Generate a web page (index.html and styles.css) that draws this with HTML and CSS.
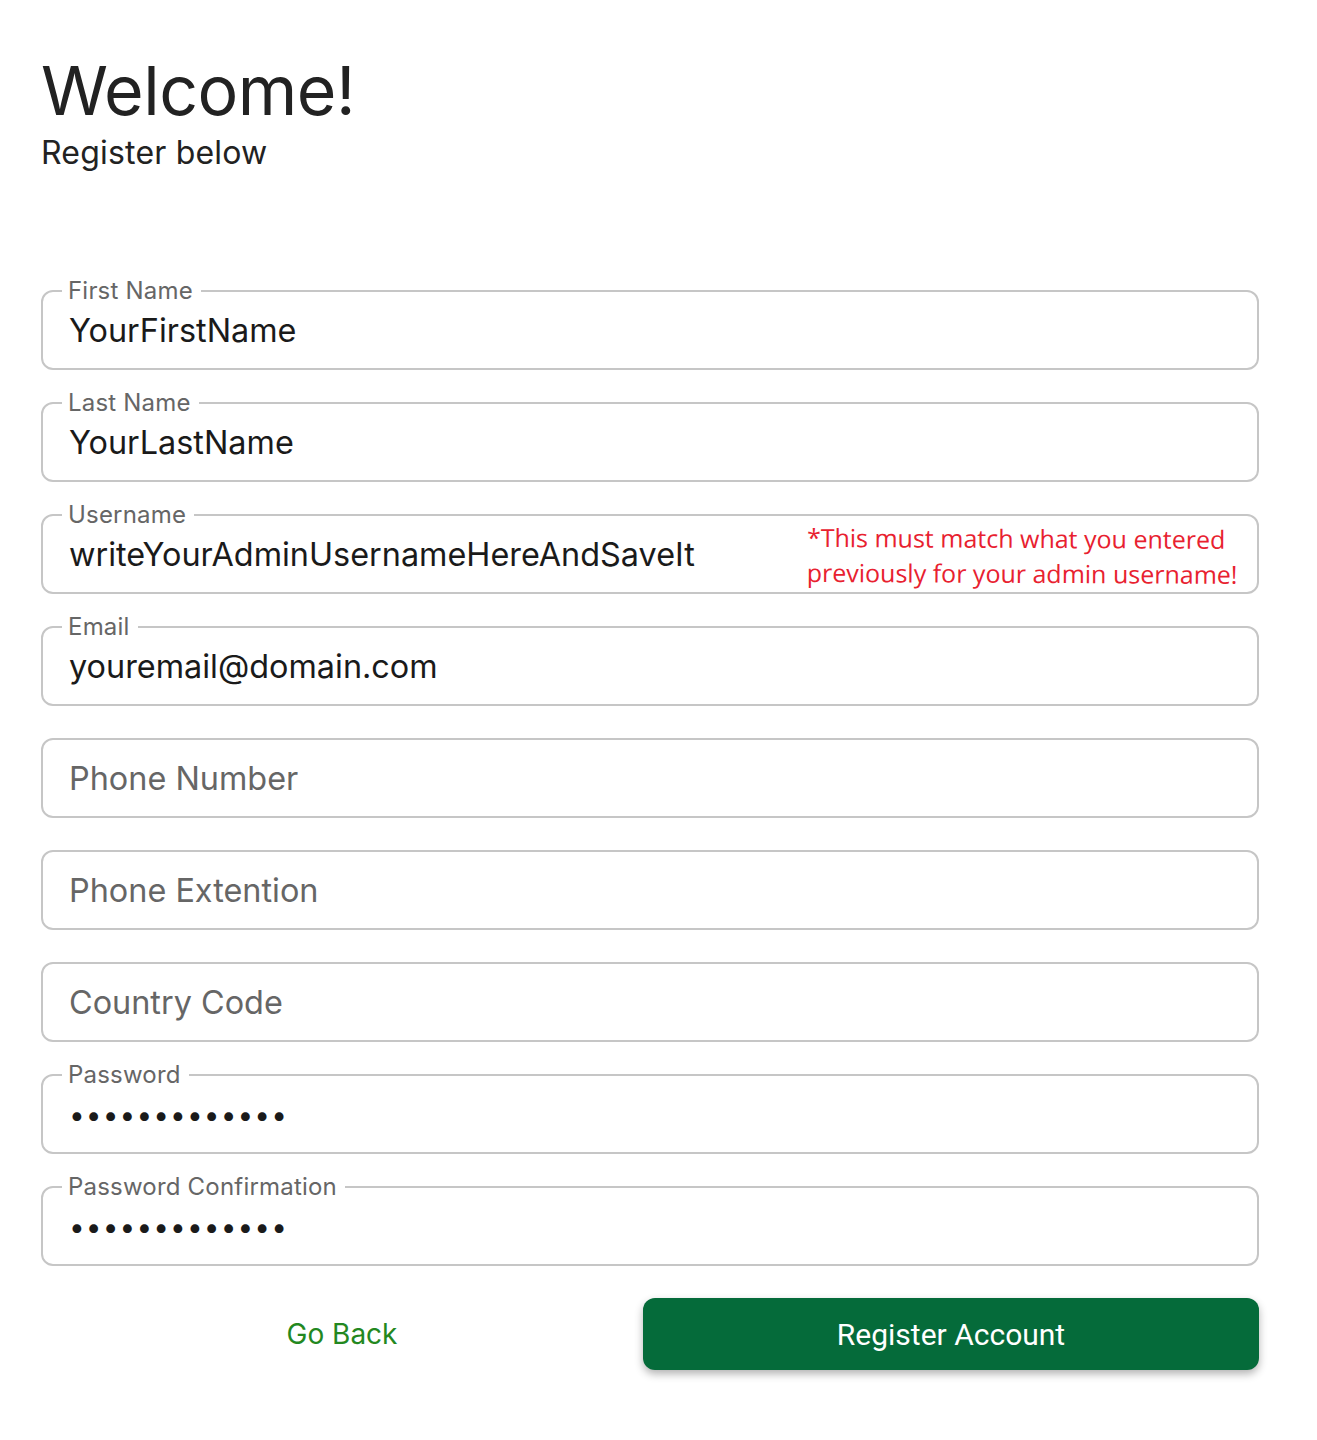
FILE: index.html
```html
<!DOCTYPE html>
<html lang="en">
<head>
<meta charset="utf-8">
<title>Register</title>
<link rel="stylesheet" href="styles.css">
</head>
<body>
<main class="page">
  <header class="intro">
    <h1 class="title">Welcome!</h1>
    <p class="subtitle">Register below</p>
  </header>
  <form class="form">
    <div class="field"><span class="label">First Name</span><span class="value">YourFirstName</span></div>
    <div class="field"><span class="label">Last Name</span><span class="value">YourLastName</span></div>
    <div class="field"><span class="label">Username</span><span class="value">writeYourAdminUsernameHereAndSaveIt</span>
      <span class="note">*This must match what you entered<br>previously for your admin username!</span></div>
    <div class="field"><span class="label">Email</span><span class="value">youremail@domain.com</span></div>
    <div class="field"><span class="placeholder">Phone Number</span></div>
    <div class="field"><span class="placeholder">Phone Extention</span></div>
    <div class="field"><span class="placeholder">Country Code</span></div>
    <div class="field"><span class="label">Password</span><span class="value dots">•••••••••••••</span></div>
    <div class="field"><span class="label">Password Confirmation</span><span class="value dots">•••••••••••••</span></div>
    <div class="actions">
      <a class="back" href="#">Go Back</a>
      <button type="button" class="submit">Register Account</button>
    </div>
  </form>
</main>
</body>
</html>
```
FILE: styles.css
```css
html, body {
  margin: 0;
  padding: 0;
  background: #fff;
}
body {
  font-family: Inter, "Noto Sans", sans-serif;
  color: #222;
}
.page {
  padding: 50px 58px 60px 41px;
}
.intro {
  margin-bottom: 114px;
}
.title {
  margin: 0;
  font-size: 68px;
  font-weight: 400;
  line-height: 80px;
  letter-spacing: -0.5px;
  color: #222;
}
.subtitle {
  margin: 0;
  font-size: 32px;
  line-height: 46px;
  letter-spacing: 0.2px;
  color: #222;
}
.form {
  display: flex;
  flex-direction: column;
  gap: 32px;
}
.field {
  position: relative;
  height: 80px;
  box-sizing: border-box;
  border: 2px solid #c6c6c6;
  border-radius: 12px;
  display: flex;
  align-items: center;
  padding-left: 26px;
}
.label {
  position: absolute;
  top: -14px;
  left: 19px;
  padding: 0 8px 0 6px;
  background: #fff;
  font-size: 24px;
  line-height: 26px;
  letter-spacing: 0.2px;
  color: #666;
}
.value {
  font-size: 32.4px;
  line-height: 38px;
  color: #1a1a1a;
  padding-top: 1px;
}
.placeholder {
  font-size: 32.4px;
  line-height: 38px;
  color: #666;
  padding-top: 2px;
}
.dots {
  font-size: 28px;
  letter-spacing: 1.1px;
}
.note {
  position: absolute;
  left: 764px;
  top: 4px;
  font-family: "Open Sans", sans-serif;
  font-size: 25px;
  line-height: 35px;
  color: #e8212f;
  transform: rotate(0.25deg);
  transform-origin: left top;
}
.actions {
  display: grid;
  grid-template-columns: 602px 1fr;
  align-items: center;
}
.back {
  justify-self: center;
  font-size: 28px;
  color: #23881f;
  text-decoration: none;
}
.submit {
  height: 72px;
  border: none;
  border-radius: 12px;
  background: #056b3a;
  color: #fff;
  font-family: Roboto, sans-serif;
  font-size: 30px;
  box-shadow: 0 4px 8px rgba(0, 0, 0, 0.3);
}
```
